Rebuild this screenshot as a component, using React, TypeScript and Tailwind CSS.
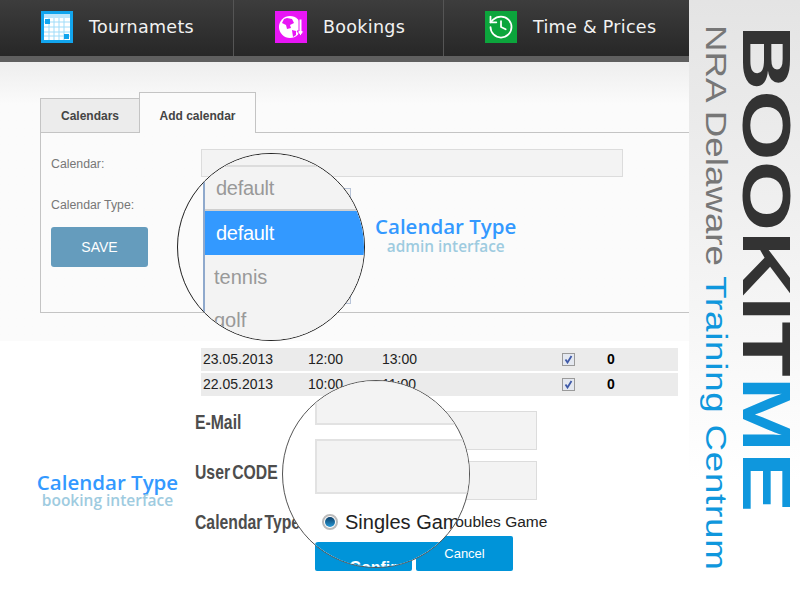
import { History } from 'lucide-react';

const sans = "font-['Liberation_Sans',Arial,sans-serif]";
const callout = "font-['Open_Sans',sans-serif] font-semibold";
const label = 'w-[120px] origin-left scale-x-[0.75] text-[21px] font-bold leading-[24px] whitespace-nowrap text-[#4d4d4d] [word-spacing:-3px]';

function CalendarIcon() {
  return (
    <svg width="32" height="32" viewBox="0 0 32 32">
      <rect width="32" height="32" fill="#12a5ee" />
      <rect x="3" y="3" width="26" height="26" fill="#fff" />
      <rect x="3" y="3" width="26" height="4" fill="#bfe6fb" />
      <path d="M8 7v22M13 7v22M18 7v22M23 7v22M3 11h26M3 16h26M3 21h26M3 25h26" stroke="#9fdcf9" strokeWidth="1" />
      <rect x="4" y="8" width="5" height="5" fill="#12a5ee" />
      <rect x="23" y="23" width="5" height="5" fill="#12a5ee" />
    </svg>
  );
}

function GlobeIcon() {
  return (
    <svg width="32" height="32" viewBox="0 0 32 32">
      <rect width="32" height="32" fill="#e815f5" />
      <circle cx="15" cy="16" r="11" fill="#fff" />
      <path d="M12 7l5 1 2 4-4 2 1 3-4 1-1-4-4-2 2-4zM17 19l4 1 0 4-3 2z" fill="#e815f5" />
      <path d="M24 8h3v12h2l-3.500 5-3.500-5h2z" fill="#fff" stroke="#e815f5" strokeWidth="1" />
    </svg>
  );
}

function NavItem({ icon, text, className }: { icon: React.ReactNode; text: string; className: string }) {
  return (
    <div className={`flex h-full items-center gap-4 pb-[2px] pl-[41px] ${className}`}>
      {icon}
      <span className="font-['DejaVu_Sans',sans-serif] text-[17.500px] tracking-[0.3px] whitespace-nowrap text-[#f2f2f2]">{text}</span>
    </div>
  );
}

function Magnifier({ className, children }: { className: string; children: React.ReactNode }) {
  return (
    <div className={`absolute h-[188px] w-[188px] overflow-hidden rounded-full border ${className}`}>
      {children}
    </div>
  );
}

function Row({ date, from, to }: { date: string; from: string; to: string }) {
  return (
    <div className={`flex h-[23px] items-center bg-[#ebebeb] pl-[2px] text-[14px] text-[#222] ${sans}`}>
      <span className="w-[105px]">{date}</span>
      <span className="w-[74px]">{from}</span>
      <span className="w-[180px]">{to}</span>
      <span className="flex h-[13px] w-[13px] items-center justify-center border border-[#9a9a9a] bg-[#e4e8f0]">
        <svg width="9" height="9" viewBox="0 0 9 9"><path d="M1.500 4.500l2 3 4-6.500" fill="none" stroke="#3f5aa8" strokeWidth="1.800" /></svg>
      </span>
      <span className="ml-[32px] font-bold text-black">0</span>
    </div>
  );
}

export default function App() {
  return (
    <div className="relative flex h-[600px] w-[800px] overflow-hidden bg-white">
      <div className="flex w-[689px] flex-col">
        <header className="flex h-[62px] border-b-[6px] border-[#5f5f5f] bg-gradient-to-b from-[#3d3d3d] to-[#272727]">
          <NavItem icon={<CalendarIcon />} text="Tournamets" className="w-[234px] border-r border-[#555]" />
          <NavItem icon={<GlobeIcon />} text="Bookings" className="w-[210px] border-r border-[#555]" />
          <NavItem icon={<div className="flex h-8 w-8 items-center justify-center bg-[#0ca53c]"><History size={28} color="#fff" strokeWidth={1.5} /></div>} text="Time & Prices" className="flex-1" />
        </header>

        <section className={`relative h-[279px] bg-gradient-to-b from-[#eeeeee] to-[#fbfbfb] to-[15%] pl-[40px] pt-[30px] ${sans}`}>
          <div className="flex h-[41px] items-end border-b border-[#c4c4c4]">
            <div className="-mb-px flex h-[35px] w-[100px] items-center justify-center border border-[#c4c4c4] bg-[#ececec] text-[12px] font-bold text-[#444]">Calendars</div>
            <div className="-mb-px -ml-px flex h-[41px] w-[117px] items-center justify-center border border-b-0 border-[#c4c4c4] bg-[#fbfbfb] pt-[5px] text-[12px] font-bold text-[#444]">Add calendar</div>
          </div>
          <div className="h-[180px] border-b border-l border-[#c4c4c4] pl-[10px] pt-[16px] text-[12.300px] text-[#777]">
            <div className="flex h-[28px] items-center">
              <span className="w-[150px] pt-[2px]">Calendar:</span>
              <div className="h-[28px] w-[422px] border border-[#dcdcdc] bg-[#f3f3f3]" />
            </div>
            <div className="mt-[14px] flex h-[26px] items-center">
              <span className="w-[150px] pt-[2px]">Calendar Type:</span>
            </div>
            <button className="mt-[10px] h-[40px] w-[97px] rounded-[3px] bg-[#659cbd] text-[14px] text-white">SAVE</button>
          </div>
          {/* select box peeking out from behind the magnifier */}
          <div className="absolute left-[201px] top-[126px] h-[116px] w-[150px] border border-[#b8c4d8] bg-[#f3f3f3]" />
          <div className={`absolute left-[375px] top-[150px] flex flex-col items-center ${callout}`}>
            <span className="text-[20.500px] leading-[28px] text-[#3399ff]">Calendar Type</span>
            <span className="-mt-[3px] text-[15.400px] leading-[20px] text-[#9ecbe0]">admin interface</span>
          </div>
        </section>

        <section className={`flex flex-1 pt-[7px] ${sans}`}>
          <div className={`flex w-[195px] justify-center pl-[20px] pt-[120px] ${callout}`}>
            <div className="flex flex-col items-center">
              <span className="text-[20.500px] leading-[28px] text-[#3399ff]">Calendar Type</span>
              <span className="-mt-[6px] text-[15.500px] leading-[20px] text-[#9ecbe0]">booking interface</span>
            </div>
          </div>
          <div className="flex-1">
            <div className="ml-[6px] mr-[11px] flex flex-col gap-[2px]">
              <Row date="23.05.2013" from="12:00" to="13:00" />
              <Row date="22.05.2013" from="10:00" to="11:00" />
            </div>
            <div className="mt-[15px] flex h-[39px]">
              <span className={`${label} -mt-px`}>E-Mail</span>
              <div className="w-[222px] border border-[#dcdcdc] bg-[#f3f3f3]" />
            </div>
            <div className="mt-[11px] flex h-[39px]">
              <span className={`${label} -mt-px`}>User CODE</span>
              <div className="w-[222px] border border-[#dcdcdc] bg-[#f3f3f3]" />
            </div>
            <div className="mt-[8px] flex h-[28px] items-center">
              <span className={label}>Calendar Type</span>
              <span className="ml-[129px] text-[15.500px] text-[#222]">Doubles Game</span>
            </div>
            <div className="ml-[120px] flex gap-1">
              <button aria-label="Confirm" className="h-[35px] w-[97px] rounded-[2px] bg-[#0094d9]" />
              <button className="h-[35px] w-[97px] rounded-[2px] bg-[#0094d9] text-[13px] text-white">Cancel</button>
            </div>
          </div>
        </section>
      </div>

      <aside className="flex w-[111px] flex-row-reverse justify-start gap-[2px] bg-gradient-to-b from-[#e4e4e4] to-white to-80% pt-[25px]">
        <div className="-mr-px h-[480px] origin-top scale-y-[1.33] font-['Liberation_Sans',sans-serif] text-[68px] font-bold leading-[68px] whitespace-nowrap [writing-mode:vertical-rl]">
          <span className="text-[#333]">BOOKIT</span><span className="text-[#0f97dd]">ME</span>
        </div>
        <div className="h-[450px] origin-top scale-y-[1.225] font-['Liberation_Sans',sans-serif] text-[30px] leading-[30px] whitespace-nowrap [writing-mode:vertical-rl]">
          <span className="text-[#777]">NRA Delaware </span><span className="tracking-[0.6px] text-[#0f97dd]">Training Centrum</span>
        </div>
      </aside>

      <Magnifier className={`left-[177px] top-[153px] border-[#222] bg-[#fbfbfb] ${sans}`}>
        <div className="h-[13px] border-b-2 border-[#dcdcdc] bg-[#f3f3f3]" />
        <div className="ml-[25px] flex flex-col border-l-2 border-[#8fa9cc] bg-[#f3f3f3] text-[20px] text-[#999]">
          <div className="flex h-[44px] shrink-0 items-center border-b-2 border-[#cfcfcf] pl-[11px] tracking-[-0.3px]">default</div>
          <div className="flex h-[44px] shrink-0 items-center bg-[#3399ff] pl-[11px] font-medium tracking-[-0.3px] text-white">default</div>
          <div className="flex h-[43px] shrink-0 items-center pl-[9px]">tennis</div>
          <div className="flex h-[43px] shrink-0 items-center pl-[9px]">golf</div>
        </div>
      </Magnifier>

      <Magnifier className={`left-[282px] top-[380px] border-[#555] bg-white ${sans}`}>
        <div className="ml-[32px] flex flex-col">
          <div className="mt-[-1px] h-[45px] w-[170px] shrink-0 border-2 border-[#e2e2e2] bg-[#f3f3f3]" />
          <div className="mt-[14px] h-[55px] w-[170px] shrink-0 border-2 border-[#e2e2e2] bg-[#f3f3f3]" />
          <div className="mt-[13px] flex h-[30px] shrink-0 items-center gap-[7px] whitespace-nowrap pl-[7px] text-[20px] text-[#222]">
            <span className="flex h-[16px] w-[16px] shrink-0 items-center justify-center rounded-full border-2 border-[#bbb] bg-white"><span className="h-[10px] w-[10px] rounded-full bg-gradient-to-b from-[#0b3f68] to-[#2a9bd8]" /></span>
            Singles Game
          </div>
          <div className="mt-[5px] flex h-[34px] w-[130px] shrink-0 justify-center rounded-[3px] bg-[#0094d9] pt-[18px] text-[16px] leading-none font-bold text-white">Confirm</div>
        </div>
      </Magnifier>
    </div>
  );
}
